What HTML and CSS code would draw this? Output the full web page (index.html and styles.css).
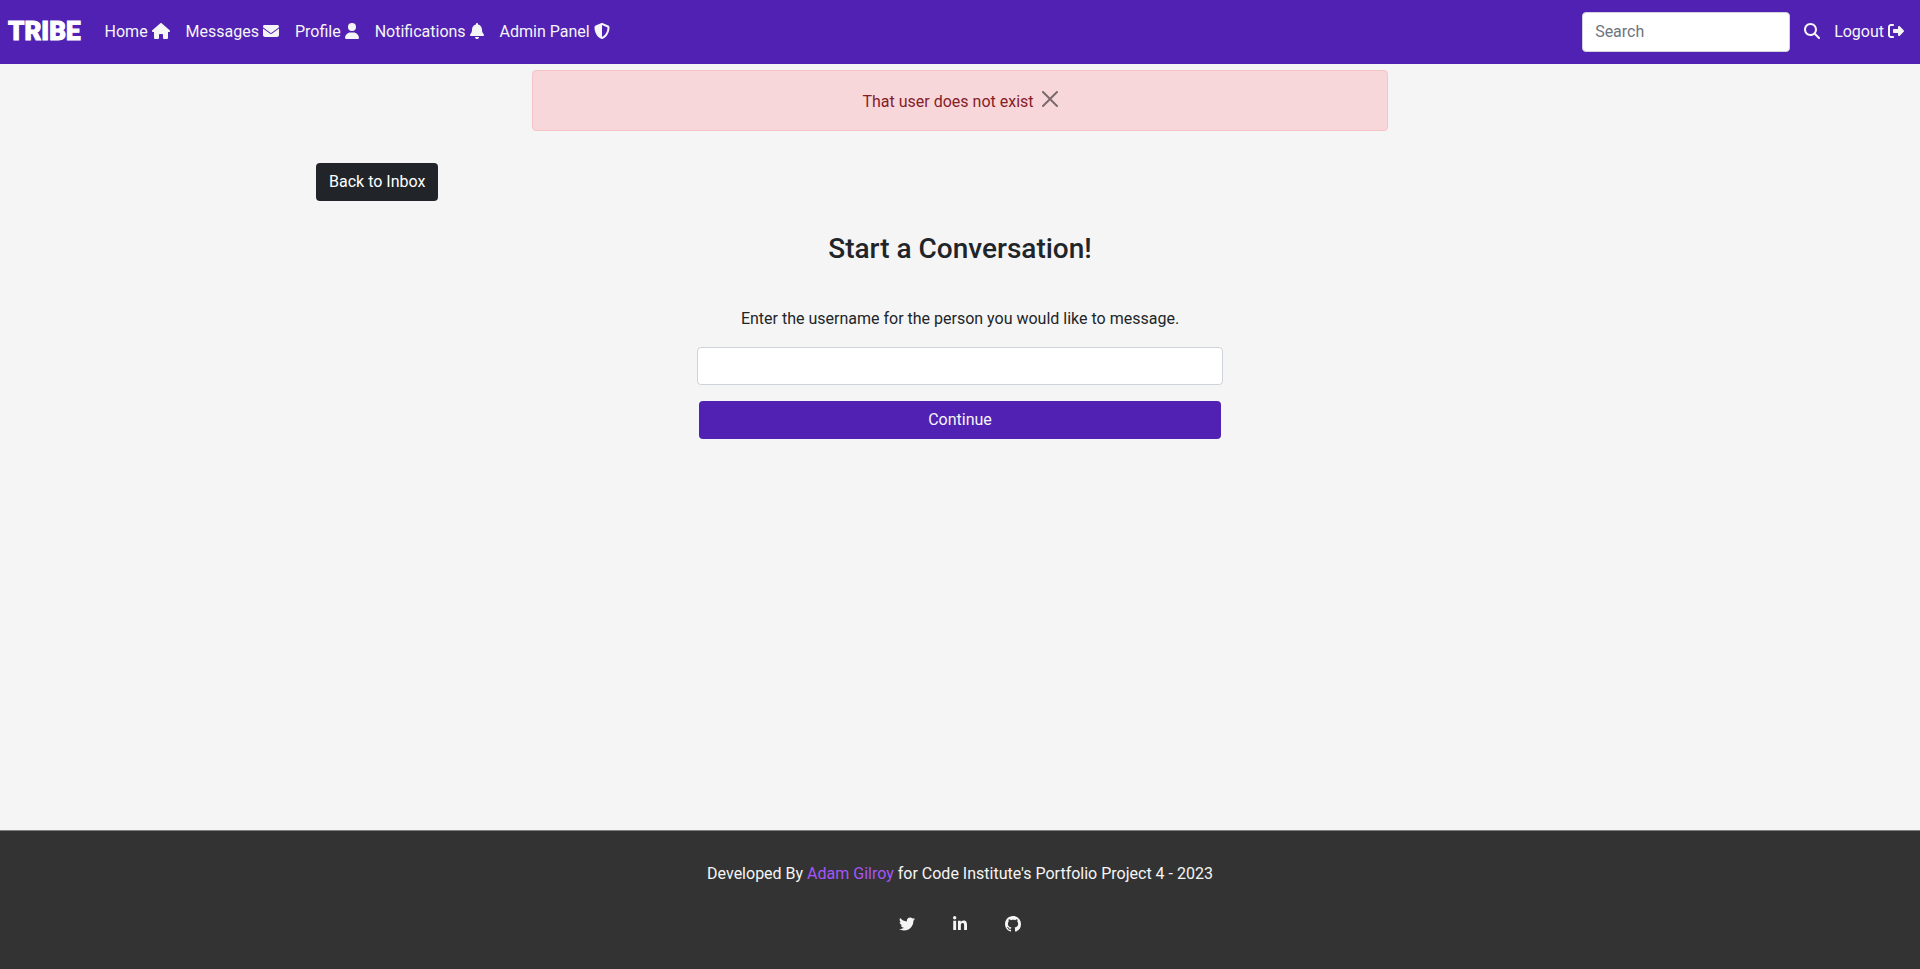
FILE: index.html
```html
<!DOCTYPE html>
<html lang="en">
<head>
<meta charset="utf-8">
<meta name="viewport" content="width=device-width, initial-scale=1">
<title>Tribe</title>
<link rel="stylesheet" href="styles.css">
</head>
<body>
<header class="navbar">
  <a class="brand" href="#">TRIBE</a>
  <nav class="nav-links">
    <a class="nav-link" href="#">Home <svg class="icon icon-wide" viewBox="0 0 576 512" aria-hidden="true"><path d="M575.8 255.5c0 18-15 32.1-32 32.1h-32l.7 160.2c0 2.7-.2 5.4-.5 8.1V472c0 22.1-17.9 40-40 40H456c-1.1 0-2.2 0-3.3-.1c-1.4 .1-2.8 .1-4.2 .1H416 392c-22.1 0-40-17.9-40-40V448 384c0-17.7-14.3-32-32-32H256c-17.7 0-32 14.3-32 32v64 24c0 22.1-17.9 40-40 40H160 128.1c-1.5 0-3-.1-4.5-.2c-1.2 .1-2.4 .2-3.6 .2H104c-22.1 0-40-17.9-40-40V360c0-.9 0-1.9 .1-2.8V287.6H32c-18 0-32-14-32-32.1c0-9 3-17 10-24L266.4 8c7-7 15-8 22-8s15 2 21 7L564.8 231.5c8 7 12 15 11 24z"/></svg></a>
    <a class="nav-link" href="#">Messages <svg class="icon" viewBox="0 0 512 512" aria-hidden="true"><path d="M48 64C21.5 64 0 85.5 0 112c0 15.1 7.1 29.3 19.2 38.4L236.8 313.6c11.4 8.5 27 8.5 38.4 0L492.8 150.4c12.1-9.1 19.2-23.3 19.2-38.4c0-26.5-21.5-48-48-48H48zM0 176V384c0 35.3 28.7 64 64 64H448c35.3 0 64-28.7 64-64V176L294.4 339.2c-22.8 17.1-54 17.1-76.8 0L0 176z"/></svg></a>
    <a class="nav-link" href="#">Profile <svg class="icon icon-narrow" viewBox="0 0 448 512" aria-hidden="true"><path d="M224 256A128 128 0 1 0 224 0a128 128 0 1 0 0 256zm-45.7 48C79.8 304 0 383.8 0 482.3C0 498.7 13.3 512 29.7 512H418.3c16.4 0 29.7-13.3 29.7-29.7C448 383.8 368.2 304 269.7 304H178.3z"/></svg></a>
    <a class="nav-link" href="#">Notifications <svg class="icon icon-narrow" viewBox="0 0 448 512" aria-hidden="true"><path d="M224 0c-17.7 0-32 14.3-32 32V51.2C119 66 64 130.6 64 208v18.8c0 47-17.3 92.4-48.5 127.6l-7.4 8.3c-8.4 9.4-10.4 22.9-5.3 34.4S19.4 416 32 416H416c12.6 0 24-7.4 29.2-18.9s3.1-25-5.3-34.4l-7.4-8.3C401.3 319.2 384 273.9 384 226.8V208c0-77.4-55-142-128-156.8V32c0-17.7-14.3-32-32-32zm45.3 493.3c12-12 18.7-28.3 18.7-45.3H224 160c0 17 6.7 33.3 18.7 45.3s28.3 18.7 45.3 18.7s33.3-6.7 45.3-18.7z"/></svg></a>
    <a class="nav-link" href="#">Admin Panel <svg class="icon" viewBox="0 0 512 512" aria-hidden="true"><path d="M256 0c4.6 0 9.2 1 13.4 2.9L457.7 82.8c22 9.3 38.4 31 38.3 57.2c-.5 99.2-41.3 280.7-213.6 363.2c-16.7 8-36.1 8-52.8 0C57.3 420.7 16.5 239.2 16 140c-.1-26.2 16.3-47.9 38.3-57.2L242.7 2.9C246.8 1 251.4 0 256 0zm0 66.8V444.8C394 378 431.1 230.1 432 141.4L256 66.8l0 0z"/></svg></a>
  </nav>
  <form class="search" role="search">
    <input class="field search-field" type="search" placeholder="Search" aria-label="Search">
    <button class="search-button" type="button" aria-label="Submit search"><svg class="icon" viewBox="0 0 512 512" aria-hidden="true"><path d="M416 208c0 45.9-14.9 88.3-40 122.7L502.6 457.4c12.5 12.5 12.5 32.8 0 45.3s-32.8 12.5-45.3 0L330.7 376c-34.4 25.2-76.8 40-122.7 40C93.1 416 0 322.9 0 208S93.1 0 208 0S416 93.1 416 208zM208 352a144 144 0 1 0 0-288 144 144 0 1 0 0 288z"/></svg></button>
  </form>
  <a class="nav-link" href="#">Logout <svg class="icon" viewBox="0 0 512 512" aria-hidden="true"><path d="M377.9 105.9L500.7 228.7c7.2 7.2 11.3 17.1 11.3 27.3s-4.1 20.1-11.3 27.3L377.9 406.1c-6.4 6.4-15 9.9-24 9.9c-18.7 0-33.9-15.2-33.9-33.9l0-62.1-128 0c-17.7 0-32-14.3-32-32l0-64c0-17.7 14.3-32 32-32l128 0 0-62.1c0-18.7 15.2-33.9 33.9-33.9c9 0 17.6 3.6 24 9.9zM160 96L96 96c-17.7 0-32 14.3-32 32l0 256c0 17.7 14.3 32 32 32l64 0c17.7 0 32 14.3 32 32s-14.3 32-32 32l-64 0c-53 0-96-43-96-96L0 128C0 75 43 32 96 32l64 0c17.7 0 32 14.3 32 32s-14.3 32-32 32z"/></svg></a>
</header>

<main class="container">
  <div class="alert" role="alert">
    <span>That user does not exist</span>
    <button class="close" type="button" aria-label="Close"><svg class="close-icon" viewBox="0 0 16 16" aria-hidden="true"><path d="M.293.293a1 1 0 011.414 0L8 6.586 14.293.293a1 1 0 111.414 1.414L9.414 8l6.293 6.293a1 1 0 01-1.414 1.414L8 9.414l-6.293 6.293a1 1 0 01-1.414-1.414L6.586 8 .293 1.707a1 1 0 010-1.414z"/></svg></button>
  </div>
  <a class="button button-dark" href="#">Back to Inbox</a>
  <h1 class="title">Start a Conversation!</h1>
  <form class="conversation">
    <label class="prompt" for="username">Enter the username for the person you would like to message.</label>
    <input class="field" id="username" type="text">
    <button class="button button-primary" type="button">Continue</button>
  </form>
</main>

<footer class="footer">
  <p class="credit">Developed By <a class="credit-link" href="#">Adam Gilroy</a> for Code Institute's Portfolio Project 4 - 2023</p>
  <div class="social">
    <a class="social-link" href="#" aria-label="Twitter"><svg class="icon" viewBox="0 0 512 512" aria-hidden="true"><path d="M459.37 151.716c.325 4.548.325 9.097.325 13.645 0 138.72-105.583 298.558-298.558 298.558-59.452 0-114.68-17.219-161.137-47.106 8.447.974 16.568 1.299 25.34 1.299 49.055 0 94.213-16.568 130.274-44.832-46.132-.975-84.792-31.188-98.112-72.772 6.498.974 12.995 1.624 19.818 1.624 9.421 0 18.843-1.3 27.614-3.573-48.081-9.747-84.143-51.98-84.143-102.985v-1.299c13.969 7.797 30.214 12.67 47.431 13.319-28.264-18.843-46.781-51.005-46.781-87.391 0-19.492 5.197-37.36 14.294-52.954 51.655 63.675 129.3 105.258 216.365 109.807-1.624-7.797-2.599-15.918-2.599-24.04 0-57.828 46.782-104.934 104.934-104.934 30.213 0 57.502 12.67 76.67 33.137 23.715-4.548 46.456-13.32 66.599-25.34-7.798 24.366-24.366 44.833-46.132 57.827 21.117-2.273 41.584-8.122 60.426-16.243-14.292 20.791-32.161 39.308-52.628 54.253z"/></svg></a>
    <a class="social-link" href="#" aria-label="LinkedIn"><svg class="icon icon-narrow" viewBox="0 0 448 512" aria-hidden="true"><path d="M100.28 448H7.4V148.9h92.88zM53.79 108.1C24.09 108.1 0 83.5 0 53.8a53.79 53.79 0 0 1 107.58 0c0 29.7-24.1 54.3-53.79 54.3zM447.9 448h-92.68V302.4c0-34.7-.7-79.2-48.29-79.2-48.29 0-55.69 37.7-55.69 76.7V448h-92.78V148.9h89.08v40.8h1.3c12.4-23.5 42.69-48.3 87.88-48.3 94 0 111.28 61.9 111.28 142.3V448z"/></svg></a>
    <a class="social-link" href="#" aria-label="GitHub"><svg class="icon" viewBox="0 0 16 16" aria-hidden="true"><path d="M8 0C3.58 0 0 3.58 0 8c0 3.54 2.29 6.53 5.47 7.59.4.07.55-.17.55-.38 0-.19-.01-.82-.01-1.49-2.01.37-2.53-.49-2.69-.94-.09-.23-.48-.94-.82-1.13-.28-.15-.68-.52-.01-.53.63-.01 1.08.58 1.23.82.72 1.21 1.87.87 2.33.66.07-.52.28-.87.51-1.07-1.78-.2-3.64-.89-3.64-3.95 0-.87.31-1.59.82-2.15-.08-.2-.36-1.02.08-2.12 0 0 .67-.21 2.2.82.64-.18 1.32-.27 2-.27.68 0 1.36.09 2 .27 1.53-1.04 2.2-.82 2.2-.82.44 1.1.16 1.92.08 2.12.51.56.82 1.27.82 2.15 0 3.07-1.87 3.75-3.65 3.95.29.25.54.73.54 1.48 0 1.07-.01 1.93-.01 2.2 0 .21.15.46.55.38A8.013 8.013 0 0016 8c0-4.42-3.58-8-8-8z"/></svg></a>
  </div>
</footer>
</body>
</html>
```
FILE: styles.css
```css
*,
*::before,
*::after {
  box-sizing: border-box;
}

body {
  display: flex;
  flex-direction: column;
  min-height: 100vh;
  margin: 0;
  background: #f5f5f5;
  color: #212529;
  font: 400 16px/24px Roboto, sans-serif;
}

a {
  color: inherit;
  text-decoration: none;
}

.icon {
  width: 16px;
  height: 16px;
  fill: currentColor;
  vertical-align: -2px;
}

.icon-wide {
  width: 18px;
}

.icon-narrow {
  width: 14px;
}

.navbar {
  display: flex;
  flex-wrap: wrap;
  align-items: center;
  padding: 12px 8px;
  background: #5121b3;
  color: #f5f5f5;
}

.brand {
  margin-right: 16px;
  padding-bottom: 2px;
  color: #fff;
  font-size: 26px;
  font-weight: 900;
  line-height: 38px;
  -webkit-text-stroke: 1px #fff;
}

.nav-links {
  display: flex;
  flex-wrap: wrap;
  margin-right: auto;
}

.nav-link {
  padding: 8px;
}

.field {
  width: 100%;
  height: 38px;
  padding: 6px 12px;
  border: 1px solid #ced4da;
  border-radius: 4px;
  background: #fff;
  color: #212529;
  font: inherit;
}

.field::placeholder {
  color: #6c757d;
  opacity: 1;
}

.search {
  display: flex;
  align-items: center;
  gap: 8px;
}

.search-field {
  width: 208px;
  height: 40px;
  padding-bottom: 8px;
}

.search-button {
  padding: 6px;
  border: 0;
  background: none;
  color: inherit;
  font: inherit;
}

.container {
  display: flex;
  flex: 1;
  flex-direction: column;
  align-items: center;
  width: 100%;
  max-width: 1320px;
  margin: 0 auto;
  padding: 6px 12px 24px;
}

.alert {
  display: flex;
  justify-content: center;
  gap: 8px;
  width: 100%;
  max-width: 856px;
  margin-bottom: 32px;
  padding: 19px 16px 16px;
  border: 1px solid #f5c2c7;
  border-radius: 4px;
  background: #f8d7da;
  color: #842029;
}

.close {
  display: flex;
  align-items: flex-start;
  padding: 1px 0;
  border: 0;
  background: none;
  opacity: 0.5;
}

.close-icon {
  width: 16px;
  height: 16px;
  fill: #000;
}

.button {
  padding: 6px 12px;
  border: 1px solid transparent;
  border-radius: 4px;
  font: inherit;
  text-align: center;
}

.button-dark {
  align-self: flex-start;
  margin-left: 4px;
  background: #212529;
  color: #fff;
}

.button-primary {
  margin: 0 2px;
  background: #5121b3;
  color: #f5f5f5;
}

.title {
  margin: 32px 0 42px;
  font-size: 28px;
  font-weight: 500;
  line-height: 32px;
}

.conversation {
  display: flex;
  flex-direction: column;
  gap: 16px;
  width: 100%;
  max-width: 526px;
}

.prompt {
  text-align: center;
}

.footer {
  display: flex;
  flex-direction: column;
  align-items: center;
  gap: 27px;
  padding: 31px 16px 32px;
  border-top: 1px solid #808080;
  background: #333;
  color: #f5f5f5;
}

.credit {
  margin: 0;
  text-align: center;
}

.credit-link {
  color: #a855f7;
}

.social {
  display: flex;
  gap: 38px;
}
```
